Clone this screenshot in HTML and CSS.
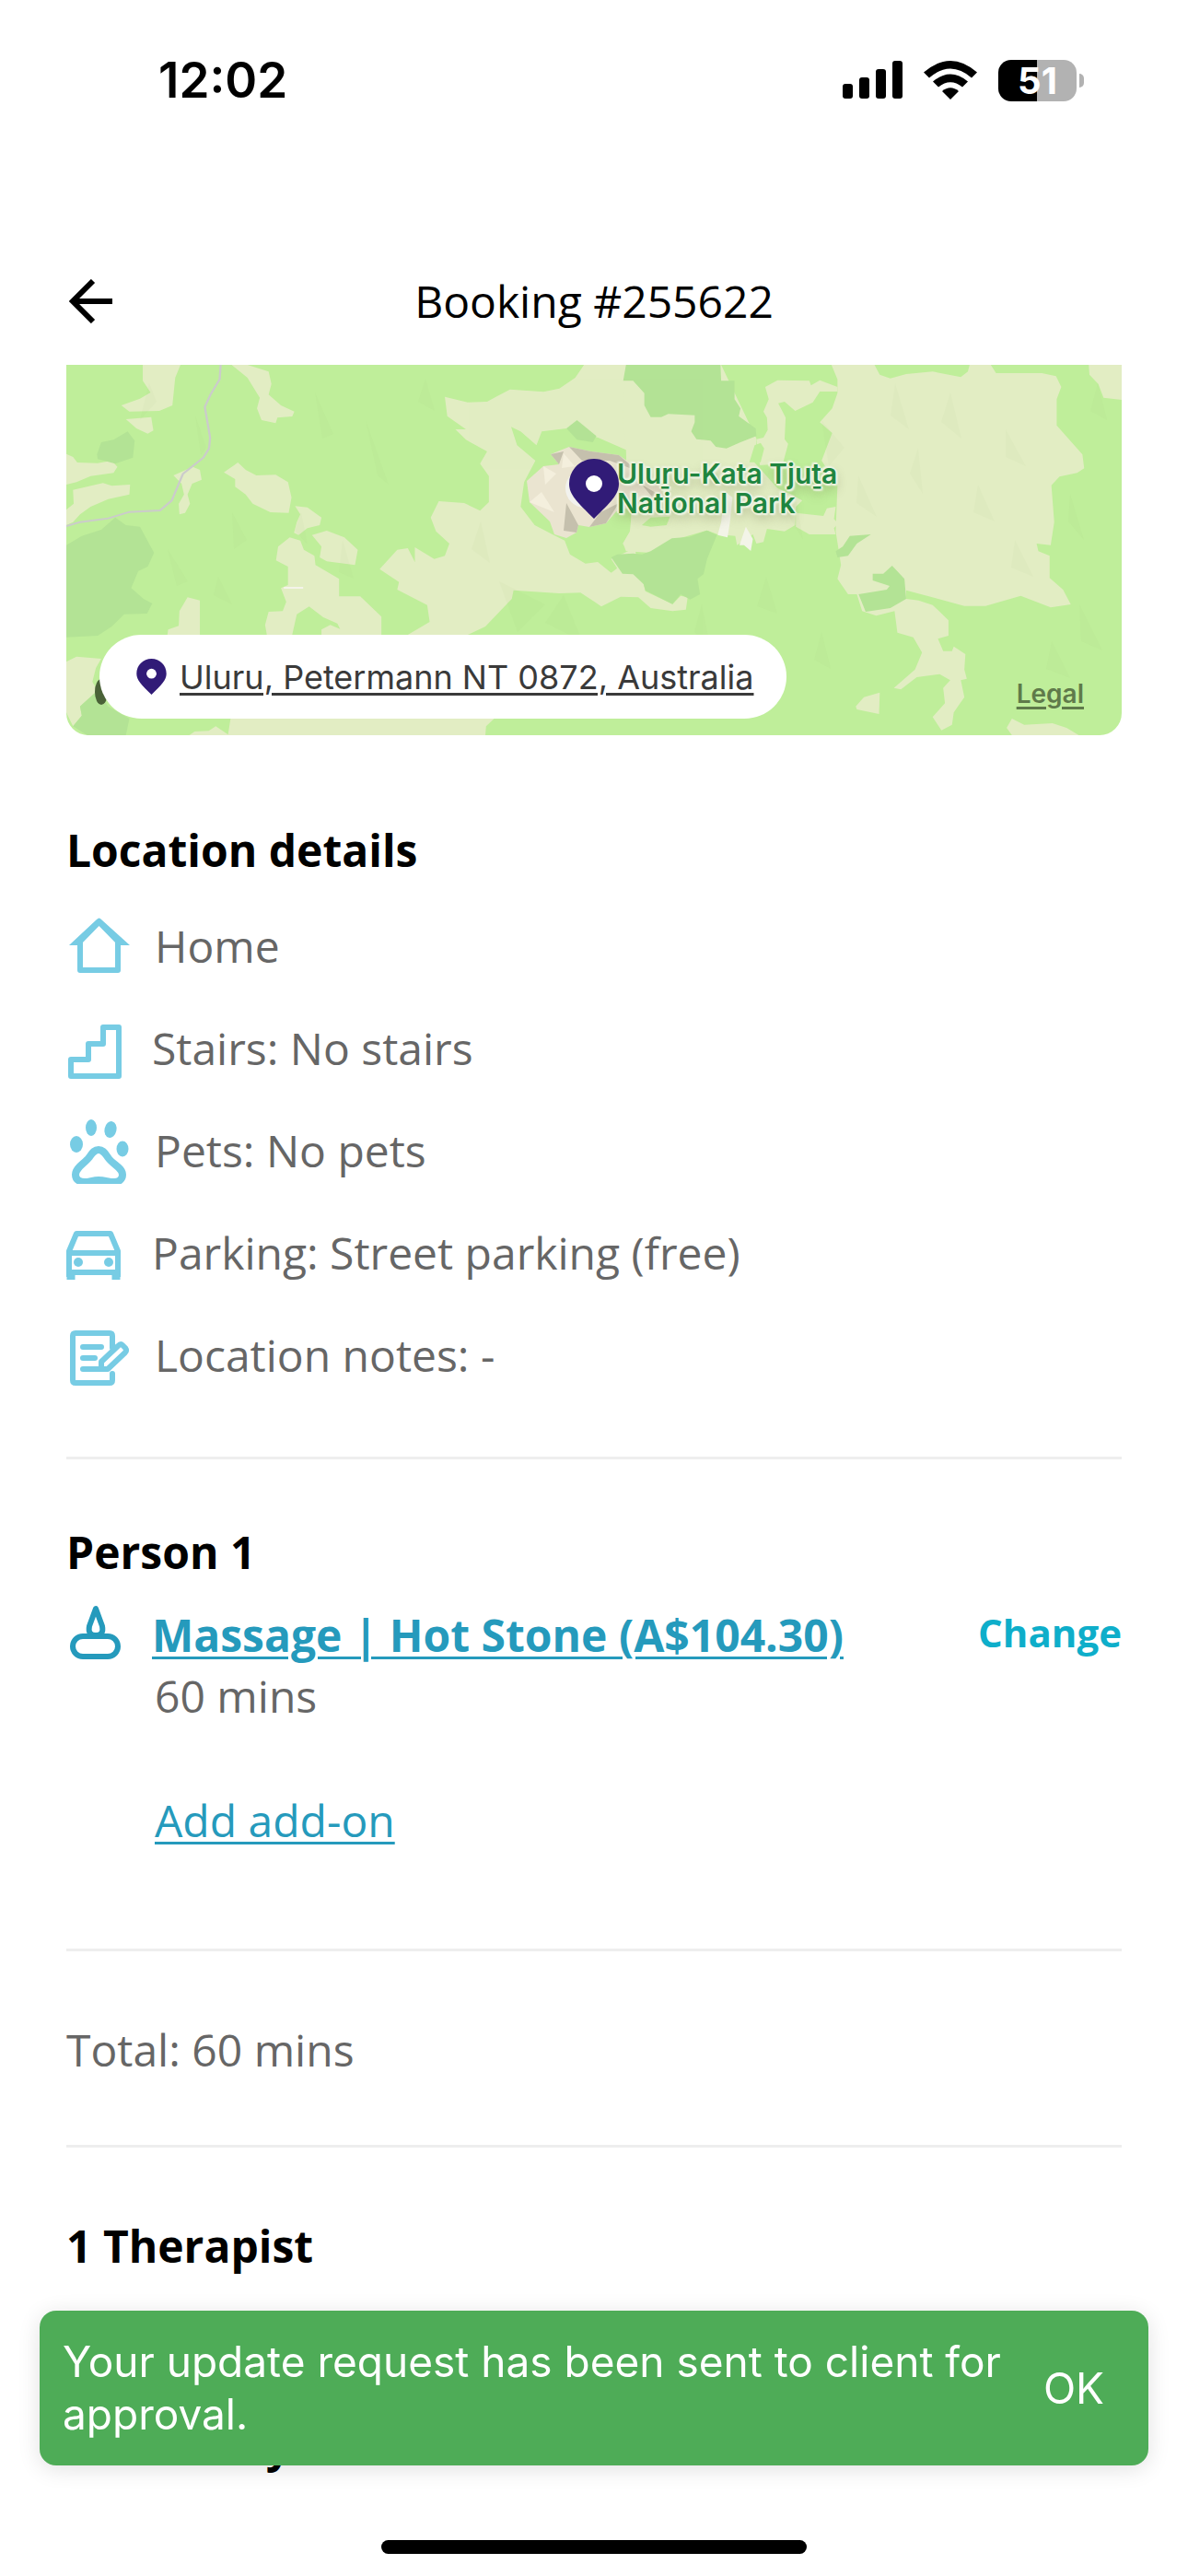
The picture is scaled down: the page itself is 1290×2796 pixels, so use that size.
FILE: index.html
```html
<!DOCTYPE html>
<html lang="en">

<head>
  <meta charset="UTF-8">
  <meta name="viewport" content="width=device-width, initial-scale=1.0">
  <title>Booking #255622</title>
  <link rel="stylesheet" href="styles.css">
</head>

<body>

  <div class="status">
    <div class="time">12:02</div>
    <div class="signals">
      <svg class="cell" viewBox="0 0 65 42">
        <rect x="0" y="25" width="11" height="16" rx="3" />
        <rect x="18" y="18" width="11" height="23" rx="3" />
        <rect x="36" y="9" width="11" height="32" rx="3" />
        <rect x="54" y="0" width="11" height="41" rx="3" />
      </svg>
      <svg class="wifi" viewBox="0 0 58 42">
        <path d="M0 12.500Q29-12.500 58 12.500L52 18.500Q29-1.500 6 18.500Z" />
        <path d="M10 22.500Q29 6.500 48 22.500L42 28.500Q29 18 16 28.500Z" />
        <path d="M20 33Q29 25.500 38 33L29 42Z" />
      </svg>
      <div class="battery">51</div>
    </div>
  </div>

  <header class="header">
    <button class="back" aria-label="Back">
      <svg viewBox="0 0 48 48">
        <path d="M26 2 4 24 26 46M5 24H47" />
      </svg>
    </button>
    <h1>Booking #255622</h1>
  </header>

  <main class="main">
    <div class="map">
      <svg class="terrain" viewBox="0 0 1146 402" preserveAspectRatio="xMidYMid slice">
        <!-- west half -->
        <g transform="scale(.3827 .3333) translate(-31 -18)">
          <g class="sand">
            <path d="M248 18H355L340 60 332 150 295 168 210 170 187 150 240 128 270 108 248 70Z" />
            <path d="M200 195 272 188 278 232 262 242 230 225Z" />
            <path d="M500 18H545L605 40 613 80 605 115 640 150 678 170 672 186 630 190 625 208 585 198 572 160 580 125 545 60Z" />
            <path d="M31 308 50 318 62 336 120 338 160 330 176 350 165 370 100 380 60 400 31 408Z" />
            <path d="M50 425 135 403 160 412 212 408 210 440 150 455 100 480 70 505 50 530 31 540V490L52 470Z" />
            <path d="M335 378 390 350 410 360 415 392 388 405 375 440 382 470 368 500 352 505 350 470 365 440 358 405Z" />
            <path d="M478 368 518 336 540 360 570 378 625 376 660 400 670 450 662 500 610 498 560 470 540 440 510 415V390Z" />
            <path d="M680 478 715 482 755 515 750 540 715 550 690 572 677 565 685 530 695 505Z" />
            <path d="M728 572 770 558 820 580 858 620 850 670 770 658 750 645 755 610Z" />
            <path d="M626 655 632 610 665 580 695 590 705 620 735 640 738 670 805 715V772H865L925 838V897H755V880L780 865 808 878 800 860 760 840 720 805 685 830 672 897H600L595 865 605 822 645 820 655 790 640 745 660 735V675Z" />
            <path d="M318 897 320 880 350 868 352 820 375 775 410 785V897Z" />
            <path d="M31 985 60 968 130 975 115 1005 105 1050 120 1080 70 1130 75 1160 50 1195 31 1150Z" />
            <path d="M380 1224 395 1212 435 1210 455 1195 490 1222 497 1170H1245L1222 1195 1220 1224Z" />
            <path d="M1500 18 1475 60 1430 95 1385 106 1290 98 1250 122 1225 138 1170 140 1105 122 1112 185 1165 228H1135L1165 262 1225 300 1205 340 1230 380V465L1205 493 1160 468 1088 462 1065 515 1080 560 1118 600 1105 640 1075 650 1020 612V660L1000 615 970 620 920 683 975 725 970 750 1055 800 1062 855 1040 870 1000 897H1170L1220 870 1295 780 1300 752 1430 762 1490 760 1530 790 1549 805 1604 773 1654 775 1689 810 1751 820 1789 815 1794 775 1774 770 1751 797 1674 755 1640 600V18Z" />
          </g>
          <g class="scrub">
            <path d="M1293 220 1320 235 1365 280 1380 235 1450 225 1540 255 1619 295 1624 480 1635 500 1630 560 1610 600 1625 625 1577 650 1594 680 1577 695 1539 660 1504 665 1460 635 1445 590 1410 570 1360 540 1320 480 1330 400 1362 330 1310 280Z" />
          </g>
          <g class="forest">
            <path d="M118 310 130 270 165 262 205 235 225 265 220 320 170 340 120 325Z" />
            <path d="M31 605 75 575 130 555 170 515 200 540 240 545 280 630 262 675 235 690 215 745 250 780 275 795 260 828 195 830 160 870 120 900 31 905Z" />
            <path d="M50 1195 75 1160 70 1130 118 1080 150 1130 210 1170 200 1224H90Z" />
            <path d="M1450 225 1480 198 1535 250 1525 270 1480 262Z" />
          </g>
          <path class="road" d="M469 18 466 65 440 115 424 155 439 255 436 290 420 320 362 373 330 460 297 492 210 497 150 518 70 530 31 543" />
          <path d="M648 744H703" stroke="#f4f4ea" stroke-width="6" />
        </g>
        <!-- east half -->
        <g transform="translate(558 0) scale(.3827 .3333) translate(0 -18)">
          <g class="sand">
            <path d="M130 18H400L500 258V285L490 330 560 420 600 440 630 460 612 480 610 540 580 560 530 552 520 595 500 600 490 570 445 605 440 575 390 570 360 557 260 590 200 630 130 625 122 600 145 555V500L130 470 132 295 120 200Z" />
            <path d="M500 260 520 255 532 230 530 190 520 170 535 130 525 90 560 68 650 70 655 85 680 68 730 90V105H680L660 140 610 168 580 138 562 143 583 190 580 260 590 275 575 340 510 345Z" />
            <path d="M612 500 690 510 700 485 725 480 720 520 732 535 720 550 725 570H650L612 545Z" />
            <path d="M713 18H835L850 50 880 62 925 48 1000 40 1080 58 1100 40 1105 18H1165L1180 45 1310 45 1350 55 1365 90 1352 130V215L1425 310 1430 355 1410 370 1360 382 1337 410 1345 530 1335 605 1295 600 1300 625 1332 640V712L1370 750 1392 798 1335 808 1250 770 1150 803 1090 803 925 752 925 780 960 785 1000 800 1045 850V900L1015 910 1030 950H1055L1060 935 1093 960 1090 1010 1097 1040 1080 1045 1090 1100 1060 1150 1055 1190 1025 1208 1000 1165 1035 1120 1030 1070 1050 1045 1020 1025 955 1035 910 1075 890 1070 950 1010 970 955 945 905 900 890 892 820 840 835 800 820 785 765H760L730 715 740 670 725 560 730 410 685 330 715 240 680 205 715 160 730 110V65Z" />
            <path d="M782 1130 805 1100 850 1085 848 1155 785 1140Z" />
            <path d="M1210 1200 1225 1170 1260 1190 1340 1185 1380 1200 1415 1224H1225Z" />
            <path d="M1443 18H1537V132L1485 125 1470 80 1445 50Z" />
          </g>
          <g class="scrub">
            <path d="M495 280 512 272 522 290 512 335 480 335Z" />
            <path d="M175 540 200 515 255 512 245 540 200 545Z" />
            <path d="M600 420 700 420V470L690 500 640 490 630 450Z" />
          </g>
          <g class="forest">
            <path d="M130 18H398L400 70H438V130L455 160 450 185 498 225 500 250 455 270 415 290 385 285 370 265 330 260 315 235 325 205V182L250 178 230 188H200L182 150V110L150 70H122Z" />
            <path d="M88 645 105 635 150 632 175 635 200 625 260 583 310 578 360 557 388 572 360 650 350 700 333 715 340 765 312 782 285 765 262 797 185 752 180 732 150 700 120 698Z" />
            <path d="M725 625 745 610 765 575 825 570 785 600 760 640 730 645Z" />
            <path d="M885 672 920 715 925 780 880 810 810 822 790 765 870 750 878 738 830 720V698H860Z" />
          </g>
          <g class="salt">
            <path d="M410 430 432 450 425 530 418 580 390 572 400 530Z" />
            <path d="M470 545 490 585 484 624 465 605 452 605Z" />
          </g>
        </g>
        <!-- faint hill shading -->
        <g class="hills">
          <path d="M90 20 98 40 80 60ZM140 55 152 90 146 98ZM270 30 290 75 278 80ZM325 60 350 130 338 120ZM255 160 262 195 248 180ZM390 15 400 50 382 40ZM180 160 196 190 182 200ZM110 200 132 235 120 240ZM300 190 312 232 296 225ZM165 230 180 260 160 250ZM450 170 460 215 440 200ZM470 235 520 260 490 290ZM540 250 560 300 520 280Z" />
          <path d="M820 60 845 90 828 110ZM900 20 915 70 895 55ZM960 30 972 80 950 62ZM1020 70 1042 110 1020 100ZM860 120 880 165 858 150ZM925 90 930 140 916 118ZM990 130 1008 170 985 160ZM1030 190 1050 230 1026 220ZM1090 140 1105 190 1088 170ZM1100 260 1125 310 1102 300ZM1070 300 1090 340 1064 330ZM760 230 772 270 750 262ZM690 260 700 310 682 290ZM820 290 830 330 812 320ZM790 130 800 190 782 160ZM1120 20 1130 60 1112 50Z" />
        </g>
        <!-- Uluru rock -->
        <path d="M500 126 518 110 535 108 526 97 546 89 570 94 600 98 640 126 650 145 618 156 600 156 586 172 568 176 556 174 554 182 543 188 530 184 525 170 503 149Z" fill="#eae4d0" />
        <path d="M546 89 570 94 600 98 620 115 590 104 560 104ZM543 150 556 174 554 182 540 180ZM600 150 586 172 568 176 580 160ZM625 130 650 145 640 148ZM535 108 526 97 540 94Z" fill="#c5c0ad" />
        <path d="M518 110 532 118 520 130ZM503 149 516 138 530 160ZM540 96 552 110 538 112Z" fill="#f4efdd" />
        <circle cx="563" cy="134" r="21" fill="#f2f2ee" />
        <ellipse cx="38" cy="355" rx="7" ry="14" fill="#4a6238" />
      </svg>

      <div class="park">Uluṟu-Kata Tjuṯa<br>National Park</div>
      <svg class="pin" viewBox="0 0 54 65">
        <path d="M27 0C42 0 54 12 54 27 54 39 45 47 27 65 9 47 0 39 0 27 0 12 12 0 27 0Z" />
        <circle cx="27" cy="27" r="9" />
      </svg>
      <a class="address" href="#">
        <svg class="smallpin" viewBox="0 0 54 65">
          <path d="M27 0C42 0 54 12 54 27 54 39 45 47 27 65 9 47 0 39 0 27 0 12 12 0 27 0Z" />
          <circle cx="27" cy="27" r="9" />
        </svg>
        <span>Uluru, Petermann NT 0872, Australia</span>
      </a>
      <a class="legal" href="#">Legal</a>
    </div>

    <section class="location">
      <h2>Location details</h2>
      <ul class="details">
        <li>
          <svg class="icon" viewBox="0 0 69 72">
            <path d="M15 32V62H56V32" />
            <path class="solid" d="M35.500 5.500Q37 5.500 38 7L69 35H56L35.500 14 15 35H3L33 7Q34.500 5.500 35.500 5.500Z" />
          </svg>
          <span>Home</span>
        </li>
        <li>
          <svg class="icon narrow" viewBox="0 0 66 72">
            <path d="M5 66V48H24V31H40V13H57V66Z" />
          </svg>
          <span>Stairs: No stairs</span>
        </li>
        <li>
          <svg class="icon" viewBox="0 0 69 72">
            <g class="solid">
              <ellipse cx="11" cy="29" rx="7" ry="9" />
              <ellipse cx="27" cy="11" rx="6" ry="9" />
              <ellipse cx="48" cy="13" rx="6.500" ry="9" transform="rotate(12 48 13)" />
              <ellipse cx="61" cy="34" rx="6.500" ry="8.500" />
            </g>
            <path class="thick" d="M35 35C30 35 28 39 25 43 20 50 10 54 10 62 10 68 15 70 20 70 25 70 29 68 35 68 42 68 46 70 52 70 57 70 61 67 61 62 61 54 50 51 45 43 42 39 40 35 35 35Z" />
          </svg>
          <span>Pets: No pets</span>
        </li>
        <li>
          <svg class="icon narrow" viewBox="0 0 66 72">
            <path d="M3 62V34L11 15H48L56 34V62M3 36H56M3 57H56" />
            <path d="M5 56V65M54 56V65" stroke-width="9" />
            <circle class="solid" cx="13" cy="46" r="5" />
            <circle class="solid" cx="46" cy="46" r="5" />
          </svg>
          <span>Parking: Street parking (free)</span>
        </li>
        <li>
          <svg class="icon" viewBox="0 0 69 72">
            <path d="M50 28V15Q50 12 47 12H10Q7 12 7 15V63Q7 66 10 66H47Q50 66 50 63V56M18 27H38M18 39H31M18 51H45L64 33Q66 31 64 28L61 25Q59 23 56 26L38 43V51" stroke-linecap="round" />
          </svg>
          <span>Location notes: -</span>
        </li>
      </ul>
    </section>

    <section class="person">
      <h2>Person 1</h2>
      <div class="service">
        <svg class="icon candle" viewBox="0 2 69 66">
          <path d="M32 6 25 25Q23 35 32 35 41 35 39 25Z" />
          <rect x="7" y="36" width="49" height="22" rx="11" />
        </svg>
        <a class="treatment" href="#">Massage | Hot Stone (A$104.30)</a>
        <button class="change">Change</button>
      </div>
      <p class="duration">60 mins</p>
      <a class="addon" href="#">Add add-on</a>
    </section>

    <p class="total">Total: 60 mins</p>

    <section class="therapist">
      <h2>1 Therapist</h2>
      <h2>Fri 31 May</h2>
    </section>
  </main>

  <div class="toast" role="status">
    <p>Your update request has been sent to client for approval.</p>
    <button class="ok">OK</button>
  </div>
  <div class="homebar"></div>

</body>

</html>
```
FILE: styles.css
```css
* {
  box-sizing: border-box;
  margin: 0;
  padding: 0;
}

body {
  height: 100vh;
  overflow: hidden;
  background: #fff;
  color: #666;
  font-family: "Open Sans", "Noto Sans", sans-serif;
  font-size: 48px;
  line-height: 66px;
}

button {
  border: 0;
  background: none;
  font: inherit;
  cursor: pointer;
}

svg {
  display: block;
  flex: none;
}

h2 {
  color: #000;
  font-size: 48px;
  font-weight: 700;
}

/* status bar */
.status {
  display: flex;
  justify-content: space-between;
  align-items: center;
  height: 174px;
  padding: 0 113px 0 172px;
  color: #000;
  font-family: Inter, "Liberation Sans", sans-serif;
}

.time {
  font-size: 53px;
  font-weight: 600;
}

.signals {
  display: flex;
  align-items: center;
  gap: 23px;
}

.cell {
  width: 65px;
  height: 42px;
}

.wifi {
  width: 58px;
  height: 42px;
}

.battery {
  position: relative;
  width: 85px;
  height: 45px;
  margin-right: 8px;
  border-radius: 14px;
  background: linear-gradient(90deg, #000 50%, #b2b2b2 50%);
  color: #fff;
  font-size: 40px;
  font-weight: 700;
  line-height: 45px;
  text-align: center;
}

.battery::after {
  content: '';
  position: absolute;
  left: 88px;
  top: 15px;
  width: 5px;
  height: 15px;
  border-radius: 0 8px 8px 0;
  background: #b2b2b2;
}

/* header */
.header {
  display: grid;
  grid-template-columns: 48px 1fr 48px;
  align-items: center;
  height: 222px;
  padding: 84px 75px 0;
}

.header h1 {
  color: #000;
  font-size: 48px;
  font-weight: 400;
  text-align: center;
}

.back svg {
  width: 48px;
  height: 48px;
  fill: none;
  stroke: #000;
  stroke-width: 6;
}

.main {
  padding: 0 72px;
}

/* map */
.map {
  position: relative;
  height: 402px;
  overflow: hidden;
  border-radius: 0 0 24px 24px;
  background: #bfee9a;
  font-family: Inter, "Liberation Sans", sans-serif;
}

.terrain {
  width: 100%;
  height: 100%;
}

.sand {
  fill: #e2edc3;
}

.scrub {
  fill: #bfee9a;
}

.forest {
  fill: #b3e395;
}

.salt {
  fill: #f3f4e8;
}

.road {
  fill: none;
  stroke: #cbcbcb;
  stroke-width: 6;
}

.hills {
  fill: #7a9a50;
  opacity: 0.03;
}

.park {
  position: absolute;
  left: calc(50% + 25px);
  top: 102px;
  color: #1f853f;
  font-size: 30px;
  font-weight: 600;
  line-height: 32px;
  text-shadow: 2px 0 1px #edf3e0, -2px 0 1px #edf3e0, 0 2px 1px #edf3e0, 0 -2px 1px #edf3e0, 2px 2px 2px #edf3e0, -2px -2px 2px #edf3e0, 0 6px 12px rgba(90, 90, 50, 0.4);
}

.pin {
  position: absolute;
  left: calc(50% - 27px);
  top: 102px;
  width: 54px;
  height: 65px;
}

.pin path,
.smallpin path {
  fill: #311b77;
}

.pin circle,
.smallpin circle {
  fill: #fff;
}

.address {
  position: absolute;
  left: 36px;
  bottom: 18px;
  display: flex;
  align-items: center;
  gap: 14px;
  height: 91px;
  padding: 0 36px 0 40px;
  border-radius: 46px;
  background: #fff;
  color: #3a3a3a;
  font-size: 36px;
  text-underline-offset: 4px;
  text-decoration-thickness: 3px;
}

.smallpin {
  width: 33px;
  height: 39px;
}

.legal {
  position: absolute;
  right: 41px;
  bottom: 28px;
  color: #5f7a4a;
  font-size: 28px;
  font-weight: 600;
  line-height: 34px;
  text-decoration-thickness: 3px;
  text-underline-offset: 4px;
}

/* location details */
.location {
  padding: 92px 0 74px;
}

.details {
  display: flex;
  flex-direction: column;
  gap: 39px;
  margin-top: 35px;
  list-style: none;
}

.details li {
  display: flex;
  align-items: center;
  gap: 27px;
}

.icon {
  width: 69px;
  height: 72px;
  fill: none;
  stroke: #77cce4;
  stroke-width: 6;
  stroke-linejoin: round;
}

.narrow {
  width: 66px;
}

.icon .solid {
  fill: #77cce4;
  stroke: none;
}

.icon .thick {
  stroke-width: 8;
}

/* person */
.person {
  padding: 68px 0 106px;
  border-top: 3px solid #eee;
}

.service {
  display: flex;
  align-items: center;
  gap: 24px;
  margin-top: 24px;
}

.candle {
  height: 66px;
  stroke: #259abc;
}

.treatment,
.addon {
  color: #259abc;
  text-decoration-thickness: 3px;
  text-underline-offset: 5px;
}

.treatment {
  flex: 1;
  font-weight: 700;
}

.change {
  align-self: flex-start;
  color: #0eaeca;
  font-size: 42px;
  font-weight: 700;
  line-height: 60px;
}

.duration {
  margin: 0 0 69px 96px;
}

.addon {
  display: block;
  width: max-content;
  margin-left: 96px;
}

.total {
  padding: 74px 0 70px;
  border-top: 3px solid #eee;
  border-bottom: 3px solid #eee;
}

.therapist {
  display: flex;
  flex-direction: column;
  gap: 150px;
  padding-top: 74px;
}

/* toast */
.toast {
  position: fixed;
  left: 43px;
  right: 43px;
  bottom: 120px;
  display: flex;
  align-items: center;
  justify-content: space-between;
  height: 168px;
  padding: 0 48px 0 25px;
  border-radius: 18px;
  background: #4eac57;
  box-shadow: 0 4px 24px rgba(0, 0, 0, 0.12);
  color: #fff;
  font-family: Inter, "Liberation Sans", sans-serif;
  font-size: 46px;
  line-height: 57px;
}

.toast p {
  flex: 1;
  padding-right: 30px;
}

.ok {
  color: #fff;
}

.homebar {
  position: fixed;
  left: 50%;
  bottom: 24px;
  width: 462px;
  height: 15px;
  margin-left: -231px;
  border-radius: 8px;
  background: #000;
}
```
